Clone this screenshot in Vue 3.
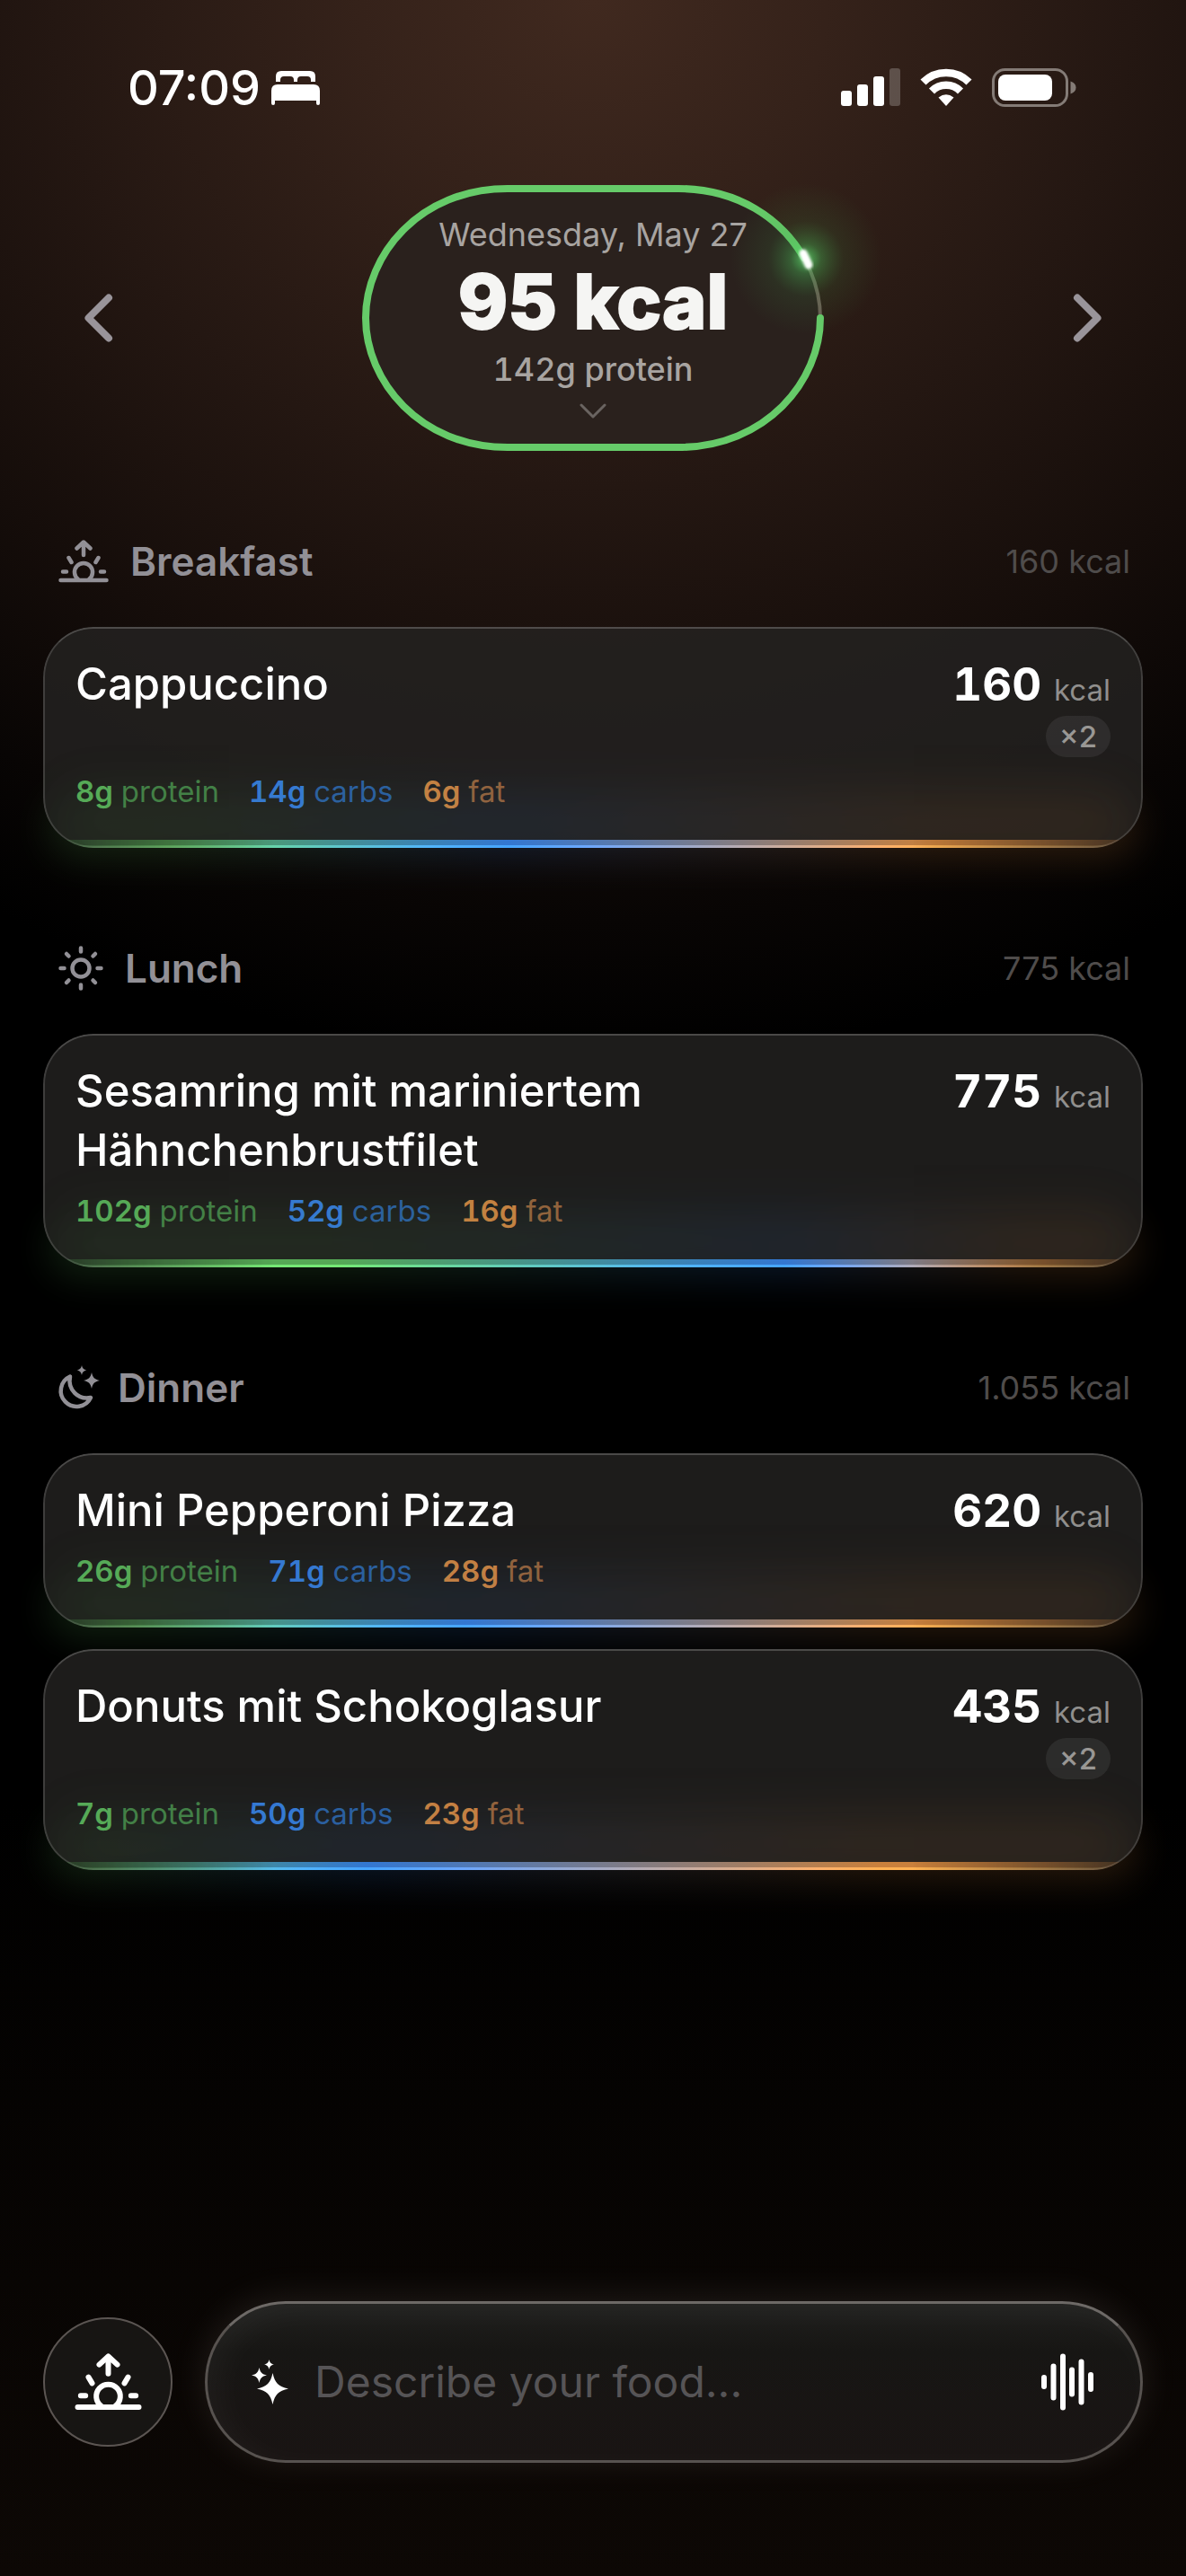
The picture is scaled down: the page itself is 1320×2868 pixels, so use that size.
<template>
    <svg class="symbols" aria-hidden="true">
        <symbol id="sunrise" viewBox="0 0 56 48">
            <g fill="none" stroke="currentColor" stroke-width="4.5" stroke-linecap="round" stroke-linejoin="round">
                <path d="M28 17V3M20.500 9.500 28 2.500l7.500 7M11.500 20l3 5M44.500 20l-3 5M5 35.500h4M47 35.500h4M2.500 45h51" />
                <path d="M22 44a10 10 0 1 1 12 0" />
            </g>
        </symbol>
        <symbol id="sun" viewBox="0 0 50 50">
            <g fill="none" stroke="currentColor" stroke-width="4.500" stroke-linecap="round">
                <circle cx="25" cy="25" r="9.500" />
                <path d="M25 2.500v4M25 43.500v4M2.500 25h4M43.500 25h4M9 9l2.500 2.500M38.500 38.500 41 41M41 9l-2.500 2.500M11.500 38.500 9 41" />
            </g>
        </symbol>
        <symbol id="star" viewBox="-10 -10 20 20">
            <path fill="currentColor" d="M0-10C1.500-3.500 3.500-1.500 10 0 3.500 1.500 1.500 3.500 0 10-1.500 3.500-3.500 1.500-10 0-3.500-1.500-1.500-3.500 0-10Z" />
        </symbol>
        <symbol id="moon" viewBox="0 0 42 50" overflow="visible">
            <path d="M13 12.500A17.500 17.500 0 1 0 36 36C22 39 10 27 13 12.500Z" fill="none" stroke="currentColor"
                stroke-width="4.500" stroke-linejoin="round" />
            <use href="#star" x="20.500" y="0" width="11" height="11" />
            <use href="#star" x="28" y="8" width="18" height="18" />
        </symbol>
    </svg>

    <div class="page">
        <header class="status">
            <div class="status__group">
                <span class="status__time">07:09</span>
                <svg width="54" height="39" viewBox="0 0 54 39" fill="#fff">
                    <path d="M5 13V7q0-6 6-6h32q6 0 6 6v6h-5v-2q0-4-4-4h-7q-4 0-4 4v2h-4v-2q0-4-4-4h-7q-4 0-4 4v2Z" />
                    <path d="M0 23q0-7 7-7h40q7 0 7 7v14q0 2-2 2t-2-2v-3H4v3q0 2-2 2t-2-2Z" />
                </svg>
            </div>
            <div class="status__group status__group_right">
                <svg width="66" height="42" viewBox="0 0 66 42" fill="#fff">
                    <rect x="0" y="25" width="12" height="17" rx="3" />
                    <rect x="18" y="18" width="12" height="24" rx="3" />
                    <rect x="36" y="9" width="12" height="33" rx="3" />
                    <rect x="54" y="0" width="12" height="42" rx="3" opacity=".22" />
                </svg>
                <svg width="58" height="42" viewBox="0 0 58 42" fill="none" stroke="#fff">
                    <path d="M3.500 15.500a36 36 0 0 1 51 0" stroke-width="8.500" />
                    <path d="M13 25.500a22.500 22.500 0 0 1 32 0" stroke-width="8.500" />
                    <path d="M29 42 20.500 32.500q8.500-6.500 17 0Z" fill="#fff" stroke="none" />
                </svg>
                <svg width="94" height="43" viewBox="0 0 94 43">
                    <rect x="1.500" y="1.500" width="82" height="40" rx="13" fill="none" stroke="#847b76" stroke-width="3" />
                    <rect x="7" y="7" width="60" height="29" rx="8" fill="#fff" />
                    <path d="M87.500 14.500q6 2 6 7t-6 7Z" fill="#847b76" />
                </svg>
            </div>
        </header>

        <nav class="day">
            <button class="day__arrow" type="button" aria-label="Previous day" @click="shiftDay(-1)">
                <svg width="34" height="56" viewBox="0 0 34 56"><path d="M28 5.500 5.500 28 28 50.500" /></svg>
            </button>

            <button class="summary" type="button" @click="expanded = !expanded">
                <svg class="summary__ring" viewBox="0 0 514 296">
                    <defs>
                        <radialGradient id="spark">
                            <stop offset="0" stop-color="#5fe070" stop-opacity=".8" />
                            <stop offset=".2" stop-color="#4cc45c" stop-opacity=".38" />
                            <stop offset=".5" stop-color="#3f8f45" stop-opacity=".14" />
                            <stop offset="1" stop-color="#3f8f45" stop-opacity="0" />
                        </radialGradient>
                        <filter id="soften" x="-100%" y="-100%" width="300%" height="300%">
                            <feGaussianBlur stdDeviation="1.500" />
                        </filter>
                    </defs>
                    <path class="summary__track" :d="ringPath" />
                    <path class="summary__progress" :d="ringPath" pathLength="100" :stroke-dasharray="`${progress} 100`" />
                    <circle cx="494" cy="82" r="84" fill="url(#spark)" />
                    <path d="m491 76 6 13" stroke="#fff" stroke-width="9" stroke-linecap="round" filter="url(#soften)" />
                </svg>
                <span class="summary__date">Wednesday, May 27</span>
                <span class="summary__kcal">95 kcal</span>
                <span class="summary__protein">142g protein</span>
                <svg class="summary__more" width="30" height="18" viewBox="0 0 30 18">
                    <path d="m2 2 13 13L28 2" />
                </svg>
            </button>

            <button class="day__arrow" type="button" aria-label="Next day" @click="shiftDay(1)">
                <svg width="34" height="56" viewBox="0 0 34 56"><path d="M6 5.500 28.500 28 6 50.500" /></svg>
            </button>
        </nav>

        <main class="meals">
            <section v-for="meal in meals" :key="meal.name" class="meal">
                <div class="meal__head">
                    <svg class="meal__icon" :class="'meal__icon_' + meal.icon"><use :href="'#' + meal.icon" /></svg>
                    <h2 class="meal__name">{{ meal.name }}</h2>
                    <span class="meal__total">{{ meal.total }} kcal</span>
                </div>

                <article v-for="food in meal.foods" :key="food.name" class="card" :style="{ '--spectrum': spectrum(food) }">
                    <div class="card__glow"></div>
                    <div class="card__body">
                        <div class="card__top">
                            <h3 class="card__title">{{ food.name }}</h3>
                            <div class="card__energy">
                                <div class="card__kcal">{{ food.kcal }} <span class="card__unit">kcal</span></div>
                                <span v-if="food.count > 1" class="card__count">×{{ food.count }}</span>
                            </div>
                        </div>
                        <div class="card__macros">
                            <span class="macro macro_protein"><b>{{ food.protein }}g</b> protein</span>
                            <span class="macro macro_carbs"><b>{{ food.carbs }}g</b> carbs</span>
                            <span class="macro macro_fat"><b>{{ food.fat }}g</b> fat</span>
                        </div>
                        <div class="card__bar"></div>
                    </div>
                </article>
            </section>
        </main>

        <form class="composer" @submit.prevent>
            <button class="composer__meal" type="button" aria-label="Choose meal">
                <svg width="75" height="64"><use href="#sunrise" /></svg>
            </button>
            <div class="composer__field">
                <svg width="42" height="50" viewBox="0 0 42 50">
                    <use href="#star" x="6" y="15" width="35" height="35" />
                    <use href="#star" x="0" y="9" width="17" height="17" />
                    <use href="#star" x="14" y="0" width="11" height="11" />
                </svg>
                <input v-model="draft" class="composer__input" type="text" aria-label="Describe your food"
                    placeholder="Describe your food...">
                <button class="composer__voice" type="button" aria-label="Voice input">
                    <svg width="58" height="64" viewBox="0 0 58 64">
                        <path d="M3 27v10M13.500 14.500v35M24 3.500v57M34 18.500v27M44.500 9.500v45M55 24v16" />
                    </svg>
                </button>
            </div>
        </form>
    </div>
</template>

<script setup>
import { ref } from 'vue'

const draft = ref('')
const expanded = ref(false)
const dayOffset = ref(0)
const progress = ref(94.7)

const ringPath = 'M510 148C510 218 450 292 352 292H162C64 292 4 218 4 148S64 4 162 4H352C450 4 510 78 510 148'

const meals = [
    {
        name: 'Breakfast', icon: 'sunrise', total: '160',
        foods: [
            { name: 'Cappuccino', kcal: 160, count: 2, protein: 8, carbs: 14, fat: 6 }
        ]
    },
    {
        name: 'Lunch', icon: 'sun', total: '775',
        foods: [
            { name: 'Sesamring mit mariniertem Hähnchenbrustfilet', kcal: 775, count: 1, protein: 102, carbs: 52, fat: 16 }
        ]
    },
    {
        name: 'Dinner', icon: 'moon', total: '1.055',
        foods: [
            { name: 'Mini Pepperoni Pizza', kcal: 620, count: 1, protein: 26, carbs: 71, fat: 28 },
            { name: 'Donuts mit Schokoglasur', kcal: 435, count: 2, protein: 7, carbs: 50, fat: 23 }
        ]
    }
]

// each colour peaks in the middle of its share of the calories
function spectrum(food) {
    const p = food.protein * 4
    const c = food.carbs * 4
    const f = food.fat * 9
    const sum = (p + c + f) / 100
    const stops = [p / 2, p + c / 2, p + c + f / 2].map(v => (v / sum).toFixed(1))
    return `linear-gradient(90deg, #55a855 ${stops[0]}%, #3377d2 ${stops[1]}%, #c9803c ${stops[2]}%)`
}

function shiftDay(step) {
    dayOffset.value += step
}
</script>

<style>
body {
    background: #000;
}
</style>

<style scoped>
.symbols {
    position: absolute;
    width: 0;
    height: 0;
}

.page {
    box-sizing: border-box;
    min-height: 100vh;
    padding: 0 48px 126px;
    display: flex;
    flex-direction: column;
    color: #fff;
    font-family: Inter, "Liberation Sans", sans-serif;
    background:
        radial-gradient(ellipse 1300px 1180px at 50% 0, #40291f 0, #35221a 20%, #241712 46%, #150d0a 69%, #080504 87%, transparent 100%),
        linear-gradient(#000 70%, #0d0805 100%);
}

button {
    padding: 0;
    border: 0;
    background: none;
    color: inherit;
    font: inherit;
    cursor: pointer;
}

h2,
h3 {
    margin: 0;
}

.status {
    height: 206px;
    box-sizing: border-box;
    padding: 64px 74px 0 94px;
    display: flex;
    justify-content: space-between;
}

.status__group {
    height: 66px;
    display: flex;
    align-items: center;
    gap: 12px;
}

.status__group_right {
    gap: 22px;
}

.status__time {
    font-size: 54px;
    font-weight: 500;
}

.day {
    display: flex;
    align-items: center;
    justify-content: space-between;
    padding: 0 45px;
}

.day__arrow {
    display: flex;
}

.day__arrow path {
    fill: none;
    stroke: #99949a;
    stroke-width: 8;
    stroke-linecap: round;
    stroke-linejoin: round;
}

.summary {
    position: relative;
    box-sizing: border-box;
    width: 514px;
    height: 296px;
    padding-top: 33px;
    display: flex;
    flex-direction: column;
    align-items: center;
    gap: 11px;
}

.summary__ring {
    position: absolute;
    inset: 0;
    overflow: visible;
}

.summary__track {
    fill: #2a211d;
    stroke: #6b5f55;
    stroke-width: 4;
}

.summary__progress {
    fill: none;
    stroke: #66cb69;
    stroke-width: 8;
    stroke-linecap: round;
}

.summary__date,
.summary__protein {
    position: relative;
    font-size: 36px;
    line-height: 44px;
    color: #a8a4a1;
}

.summary__protein {
    font-weight: 500;
    font-variant-numeric: tabular-nums;
}

.summary__kcal {
    position: relative;
    font-size: 84px;
    line-height: 84px;
    font-weight: 800;
    color: #f5f5f3;
    -webkit-text-stroke: 2px #f5f5f3;
    stroke-linejoin: round;
    paint-order: stroke fill;
}

.summary__more {
    position: relative;
    margin-top: 5px;
    fill: none;
    stroke: #6a6461;
    stroke-width: 3;
    stroke-linecap: round;
    stroke-linejoin: round;
}

.meals {
    padding-top: 93px;
    display: flex;
    flex-direction: column;
    gap: 104px;
}

.meal {
    display: flex;
    flex-direction: column;
    gap: 24px;
}

.meal__head {
    height: 60px;
    margin-bottom: 19px;
    padding: 0 14px 0 17px;
    display: flex;
    align-items: center;
    gap: 24px;
    color: #929096;
}

.meal__icon_sunrise {
    width: 56px;
    height: 48px;
}

.meal__icon_sun {
    width: 50px;
    height: 50px;
}

.meal__icon_moon {
    width: 42px;
    height: 50px;
    overflow: visible;
}

.meal__name {
    flex: 1;
    font-size: 44px;
    font-weight: 600;
}

.meal__total {
    font-size: 36px;
    color: #4f4c4b;
}

.card {
    position: relative;
    isolation: isolate;
}

.card__glow {
    position: absolute;
    z-index: -1;
    inset: auto 6px -12px;
    height: 70px;
    border-radius: 50px;
    background: var(--spectrum);
    filter: blur(20px);
    opacity: .18;
}

.card__body {
    position: relative;
    overflow: hidden;
    padding: 31px 36px 43px;
    border-radius: 56px;
    background: rgba(37, 36, 35, .78);
}

.card__body::before {
    content: "";
    position: absolute;
    inset: 0;
    border: 2px solid rgba(255, 255, 255, .15);
    border-top-color: rgba(255, 255, 255, .2);
    border-radius: 56px;
    pointer-events: none;
}

.card__body::after {
    content: "";
    position: absolute;
    inset: auto 20px -10px;
    height: 80px;
    background: var(--spectrum);
    filter: blur(30px);
    opacity: .06;
    pointer-events: none;
}

.card__top {
    display: flex;
    justify-content: space-between;
    align-items: flex-start;
}

.card__title {
    max-width: 720px;
    font-size: 49px;
    line-height: 66px;
    font-weight: 500;
}

.card__energy {
    display: flex;
    flex-direction: column;
    align-items: flex-end;
}

.card__kcal {
    font-size: 51px;
    line-height: 66px;
    font-weight: 700;
    font-variant-numeric: tabular-nums;
}

.card__unit {
    font-size: 33px;
    line-height: 1;
    font-weight: 400;
    color: #908f8d;
}

.card__count {
    margin: 2px 0 4px;
    padding: 0 15px;
    border-radius: 23px;
    background: rgba(255, 255, 255, .07);
    font-size: 33px;
    line-height: 46px;
    font-weight: 500;
    color: #999794;
}

.card__macros {
    margin-top: 14px;
    display: flex;
    gap: 33px;
    font-size: 33px;
    line-height: 40px;
    font-variant-numeric: tabular-nums;
}

.macro b {
    font-weight: 600;
}

.macro_protein {
    color: #437f46;
}

.macro_protein b {
    color: #57ab58;
}

.macro_carbs {
    color: #2b5f9f;
}

.macro_carbs b {
    color: #3579d4;
}

.macro_fat {
    color: #94623a;
}

.macro_fat b {
    color: #c8813f;
}

.card__bar {
    position: absolute;
    inset: auto 0 0;
    height: 9px;
    background: var(--spectrum);
    -webkit-mask-image: linear-gradient(90deg, rgba(0, 0, 0, .1), #000 21%, #000 79%, rgba(0, 0, 0, .1));
    mask-image: linear-gradient(90deg, rgba(0, 0, 0, .1), #000 21%, #000 79%, rgba(0, 0, 0, .1));
}

.card__bar::after {
    content: "";
    position: absolute;
    inset: auto 0 0;
    height: 3px;
    background: var(--spectrum);
    filter: brightness(1.4);
}

.composer {
    margin-top: auto;
    display: flex;
    align-items: center;
    gap: 36px;
}

.composer__meal {
    box-sizing: border-box;
    width: 144px;
    height: 144px;
    flex: none;
    display: flex;
    align-items: center;
    justify-content: center;
    border: 2px solid #5b5552;
    border-radius: 50%;
    background: #171513;
}

.composer__field {
    box-sizing: border-box;
    height: 180px;
    flex: 1;
    padding: 0 52px 0 49px;
    display: flex;
    align-items: center;
    gap: 28px;
    border: 3px solid #57524f;
    border-top-color: #6d6966;
    border-radius: 90px;
    background: linear-gradient(#20201e, #171614 30%, #191413);
    box-shadow: 0 -4px 40px rgba(255, 240, 230, .1), inset 12px 8px 36px rgba(255, 255, 255, .04);
}

.composer__input {
    flex: 1;
    min-width: 0;
    padding: 0;
    border: 0;
    outline: 0;
    background: none;
    color: #fff;
    font: 400 48px/66px Inter, "Liberation Sans", sans-serif;
}

.composer__input::placeholder {
    color: #565456;
    opacity: 1;
}

.composer__voice {
    display: flex;
}

.composer__voice path {
    fill: none;
    stroke: #fff;
    stroke-width: 6;
    stroke-linecap: round;
}
</style>
